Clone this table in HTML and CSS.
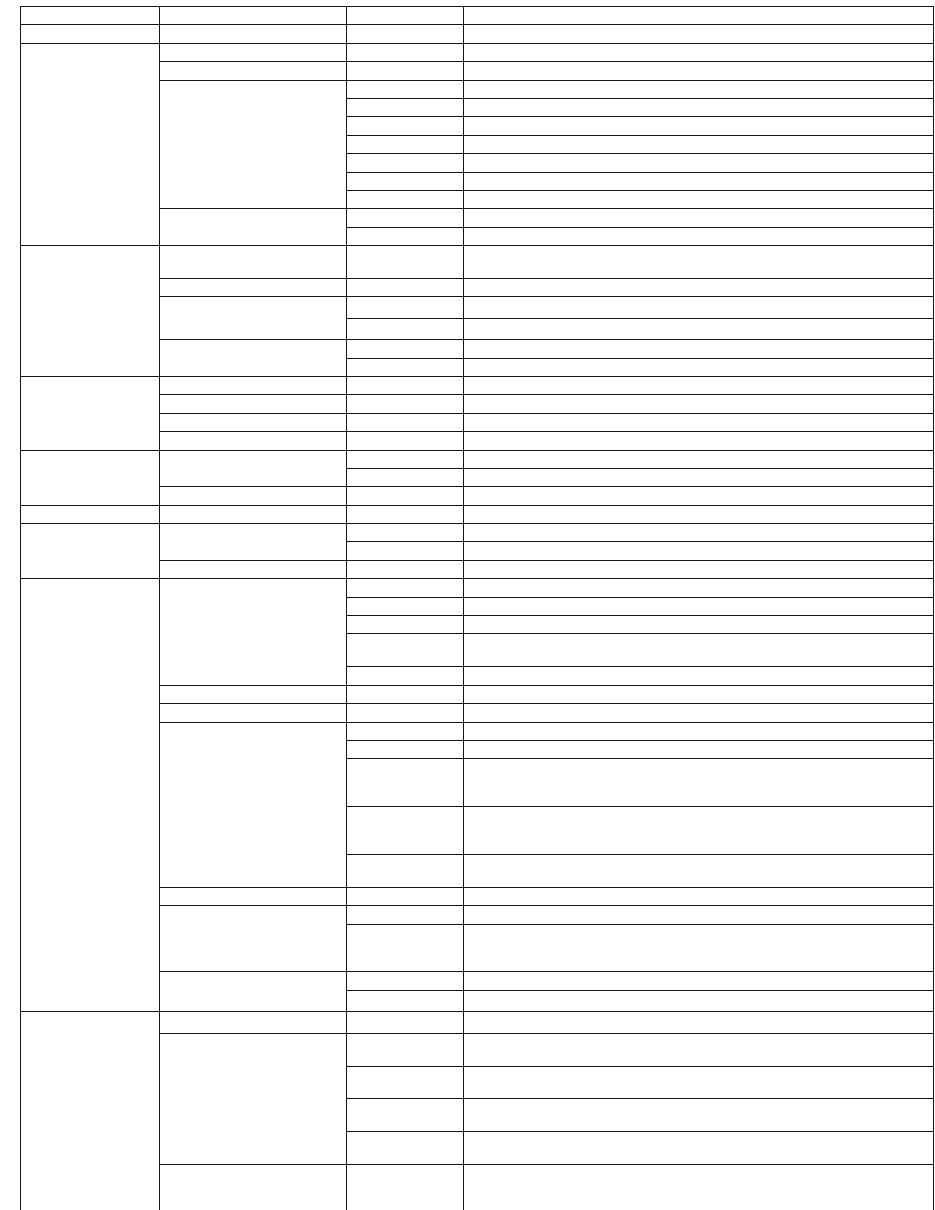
FILE: index.html
```html
<!DOCTYPE html>
<html>
<head>
<meta charset="utf-8">
<link rel="stylesheet" href="styles.css">
</head>
<body>
<table class="grid">
<colgroup><col class="ca"><col class="cb"><col class="cc"><col class="cd"></colgroup>
<tbody>
<tr class="s"><td></td><td></td><td></td><td></td></tr>
<tr class="s"><td></td><td></td><td></td><td></td></tr>
<tr class="s"><td rowspan="11"></td><td></td><td></td><td></td></tr>
<tr class="s"><td></td><td></td><td></td></tr>
<tr class="s"><td rowspan="7"></td><td></td><td></td></tr>
<tr class="s"><td></td><td></td></tr>
<tr class="s"><td></td><td></td></tr>
<tr class="s"><td></td><td></td></tr>
<tr class="s"><td></td><td></td></tr>
<tr class="s"><td></td><td></td></tr>
<tr class="s"><td></td><td></td></tr>
<tr class="s"><td rowspan="2"></td><td></td><td></td></tr>
<tr class="s"><td></td><td></td></tr>
<tr class="t2"><td rowspan="6"></td><td></td><td></td><td></td></tr>
<tr class="s"><td></td><td></td><td></td></tr>
<tr class="m"><td rowspan="2"></td><td></td><td></td></tr>
<tr class="m"><td></td><td></td></tr>
<tr class="s"><td rowspan="2"></td><td></td><td></td></tr>
<tr class="s"><td></td><td></td></tr>
<tr class="s"><td rowspan="4"></td><td></td><td></td><td></td></tr>
<tr class="s"><td></td><td></td><td></td></tr>
<tr class="s"><td></td><td></td><td></td></tr>
<tr class="s"><td></td><td></td><td></td></tr>
<tr class="s"><td rowspan="3"></td><td rowspan="2"></td><td></td><td></td></tr>
<tr class="s"><td></td><td></td></tr>
<tr class="s"><td></td><td></td><td></td></tr>
<tr class="s"><td></td><td></td><td></td><td></td></tr>
<tr class="s"><td rowspan="3"></td><td rowspan="2"></td><td></td><td></td></tr>
<tr class="s"><td></td><td></td></tr>
<tr class="s"><td></td><td></td><td></td></tr>
<tr class="s"><td rowspan="17"></td><td rowspan="5"></td><td></td><td></td></tr>
<tr class="s"><td></td><td></td></tr>
<tr class="s"><td></td><td></td></tr>
<tr class="t2"><td></td><td></td></tr>
<tr class="s"><td></td><td></td></tr>
<tr class="s"><td></td><td></td><td></td></tr>
<tr class="s"><td></td><td></td><td></td></tr>
<tr class="s"><td rowspan="5"></td><td></td><td></td></tr>
<tr class="s"><td></td><td></td></tr>
<tr class="t3"><td></td><td></td></tr>
<tr class="t3"><td></td><td></td></tr>
<tr class="t2"><td></td><td></td></tr>
<tr class="s"><td></td><td></td><td></td></tr>
<tr class="s"><td rowspan="2"></td><td></td><td></td></tr>
<tr class="t3"><td></td><td></td></tr>
<tr class="s"><td rowspan="2"></td><td></td><td></td></tr>
<tr class="m"><td></td><td></td></tr>
<tr class="m"><td rowspan="6"></td><td></td><td></td><td></td></tr>
<tr class="t2"><td rowspan="4"></td><td></td><td></td></tr>
<tr class="t2"><td></td><td></td></tr>
<tr class="t2"><td></td><td></td></tr>
<tr class="t2"><td></td><td></td></tr>
<tr class="t3"><td></td><td></td><td></td></tr>
</tbody>
</table>
</body>
</html>
```
FILE: styles.css
```css
html, body {
  margin: 0;
  background: #fff;
}
body {
  padding: 6px 0 0 20px;
  font-family: "Liberation Serif", serif;
  font-size: 12px;
}
.grid {
  border-collapse: collapse;
  table-layout: fixed;
  width: 913px;
}
.grid td {
  border: 1px solid #161616;
  padding: 0;
}
.ca { width: 139px; }
.cb { width: 187px; }
.cc { width: 117px; }
.cd { width: 470px; }
.s { height: 18.4px; }
.m { height: 21.4px; }
.t2 { height: 32.95px; }
.t3 { height: 47.8px; }
```
